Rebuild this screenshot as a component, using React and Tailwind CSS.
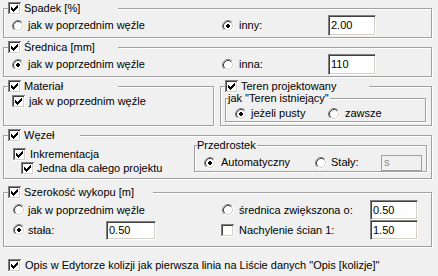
const TICK = [5, 6, 7, 6, 5, 4, 3].map((y, i) => `M${3 + i} ${y}h1v3h-1z`).join('')

function CheckBox({ checked }) {
  return (
    <svg width="13" height="13" viewBox="0 0 13 13" className="block shrink-0">
      <rect x="0" y="0" width="13" height="13" fill="#fff" />
      <path d="M0 0h13v1H1v12H0z" fill="#808080" />
      <path d="M1 1h11v1H2v10H1z" fill="#404040" />
      <path d="M12 1h1v12H0v-1h12z" fill="#fff" />
      <path d="M11 2h1v10H1v-1h10z" fill="#d4d0c8" />
      {checked && <path d={TICK} fill="#000" />}
    </svg>
  )
}

function Radio({ checked }) {
  return (
    <svg width="12" height="12" viewBox="0 0 12 12" className="block shrink-0">
      <circle cx="6" cy="6" r="5" fill="#fff" />
      <path d="M2.11 9.89A5.5 5.5 0 0 1 9.89 2.11" fill="none" stroke="#808080" />
      <path d="M9.89 2.11A5.5 5.5 0 0 1 2.11 9.89" fill="none" stroke="#fff" />
      <path d="M2.82 9.18A4.5 4.5 0 0 1 9.18 2.82" fill="none" stroke="#404040" />
      <path d="M9.18 2.82A4.5 4.5 0 0 1 2.82 9.18" fill="none" stroke="#d4d0c8" />
      {checked && <path d="M5 4h2v1h1v2h-1v1H5V7H4V5h1z" fill="#000" />}
    </svg>
  )
}

function Edit({ className, disabled, children }) {
  return (
    <div
      className={`flex items-center px-[2px] border ${
        disabled
          ? 'border-[#a0a0a0] bg-[#f0f0f0] text-[#8a8a8a]'
          : 'border-t-[#808080] border-l-[#808080] border-b-white border-r-white shadow-[inset_1px_1px_0_#404040,inset_-1px_-1px_0_#d4d0c8] bg-white'
      } ${className}`}
    >
      {children}
    </div>
  )
}

const groupCls = 'border border-[#a0a0a0] shadow-[inset_1px_1px_0_#fff,1px_1px_0_#fff] min-w-0'

function CheckLegend({ label, className }) {
  return (
    <legend className={`ml-[4px] h-[13px] flex items-center gap-[3px] bg-[#f0f0f0] ${className}`}>
      <CheckBox checked />
      <span className="whitespace-nowrap">{label}</span>
    </legend>
  )
}

export default function App() {
  return (
    <div className="w-[438px] h-[276px] overflow-hidden bg-[#f0f0f0] pt-[2px] pl-[3px] font-['Liberation_Sans',Arial,sans-serif] text-[11px] leading-[13px] text-black">
      {/* Spadek */}
      <fieldset className={`${groupCls} w-[429px]`}>
        <CheckLegend label="Spadek [%]" className="w-[110px]" />
        <div className="flex items-center h-[21px] pl-[8px] mb-[1px]">
          <div className="w-[210px] flex items-center gap-[4px]">
            <Radio />
            <span>jak w poprzednim węźle</span>
          </div>
          <div className="w-[106px] flex items-center gap-[5px]">
            <Radio checked />
            <span>inny:</span>
          </div>
          <Edit className="w-[48px] h-[21px]">2.00</Edit>
        </div>
      </fieldset>

      {/* Średnica */}
      <fieldset className={`${groupCls} w-[429px] mt-[3px]`}>
        <CheckLegend label="Średnica [mm]" className="w-[110px]" />
        <div className="flex items-center h-[21px] pl-[8px] mb-[1px]">
          <div className="w-[210px] flex items-center gap-[4px]">
            <Radio checked />
            <span>jak w poprzednim węźle</span>
          </div>
          <div className="w-[106px] flex items-center gap-[5px]">
            <Radio />
            <span>inna:</span>
          </div>
          <Edit className="w-[48px] h-[21px]">110</Edit>
        </div>
      </fieldset>

      {/* Materiał / Teren */}
      <div className="flex gap-[6px] mt-[3px]">
        <fieldset className={`${groupCls} w-[211px] h-[46px]`}>
          <CheckLegend label="Materiał" className="w-[110px]" />
          <div className="flex items-center gap-[4px] pl-[8px] pt-[2px]">
            <CheckBox checked />
            <span>jak w poprzednim węźle</span>
          </div>
        </fieldset>
        <fieldset className={`${groupCls} w-[212px] h-[46px]`}>
          <CheckLegend label="Teren projektowany" className="w-[144px]" />
          <div className="pl-[4px]">
            <fieldset className={`${groupCls} w-[201px]`}>
              <legend className="ml-[2px] pr-[1px] leading-[11px] bg-[#f0f0f0] whitespace-nowrap">
                jak "Teren istniejący"
              </legend>
              <div className="flex items-center h-[13px] pl-[9px] mt-[3px] mb-[1px]">
                <div className="w-[93px] flex items-center gap-[4px]">
                  <Radio checked />
                  <span>jeżeli pusty</span>
                </div>
                <div className="flex items-center gap-[5px]">
                  <Radio />
                  <span>zawsze</span>
                </div>
              </div>
            </fieldset>
          </div>
        </fieldset>
      </div>

      {/* Węzeł */}
      <fieldset className={`${groupCls} w-[429px] mt-[3px]`}>
        <CheckLegend label="Węzeł" className="w-[72px]" />
        <div className="flex">
          <div className="w-[190px] pl-[9px] pt-[6px] pb-[3px] flex flex-col gap-[1px]">
            <div className="flex items-center gap-[4px]">
              <CheckBox checked />
              <span>Inkrementacja</span>
            </div>
            <div className="flex items-center gap-[3px] pl-[8px]">
              <CheckBox checked />
              <span>Jedna dla całego projektu</span>
            </div>
          </div>
          <fieldset className={`${groupCls} w-[233px] h-[32px] -mt-[2px]`}>
            <legend className="ml-[2px] pr-[1px] leading-[11px] bg-[#f0f0f0]">Przedrostek</legend>
            <div className="flex items-center h-[17px] pl-[9px] mt-[3px]">
              <div className="w-[111px] flex items-center gap-[5px]">
                <Radio checked />
                <span>Automatyczny</span>
              </div>
              <div className="w-[66px] flex items-center gap-[4px]">
                <Radio />
                <span>Stały:</span>
              </div>
              <Edit disabled className="w-[41px] h-[16px]">s</Edit>
            </div>
          </fieldset>
        </div>
      </fieldset>

      {/* Szerokość wykopu */}
      <fieldset className={`${groupCls} w-[429px] mt-[7px]`}>
        <CheckLegend label="Szerokość wykopu [m]" className="w-[145px]" />
        <div className="pl-[9px] pt-[1px] pb-[6px]">
          <div className="flex items-center h-[20px]">
            <div className="w-[208px] flex items-center gap-[3px]">
              <Radio />
              <span>jak w poprzednim węźle</span>
            </div>
            <div className="w-[149px] flex items-center gap-[5px] pl-[1px]">
              <Radio />
              <span>średnica zwiększona o:</span>
            </div>
            <Edit className="w-[48px] h-[20px]">0.50</Edit>
          </div>
          <div className="flex items-center h-[20px]">
            <div className="w-[208px] flex items-center">
              <div className="w-[93px] flex items-center gap-[3px]">
                <Radio checked />
                <span>stała:</span>
              </div>
              <Edit className="w-[50px] h-[19px]">0.50</Edit>
            </div>
            <div className="w-[149px] flex items-center gap-[5px]">
              <CheckBox />
              <span>Nachylenie ścian 1:</span>
            </div>
            <Edit className="w-[48px] h-[20px]">1.50</Edit>
          </div>
        </div>
      </fieldset>

      <div className="mt-[12px] ml-[5px] flex items-center gap-[4px]">
        <CheckBox checked />
        <span className="whitespace-nowrap">
          Opis w Edytorze kolizji jak pierwsza linia na Liście danych "Opis [kolizje]"
        </span>
      </div>
    </div>
  )
}
